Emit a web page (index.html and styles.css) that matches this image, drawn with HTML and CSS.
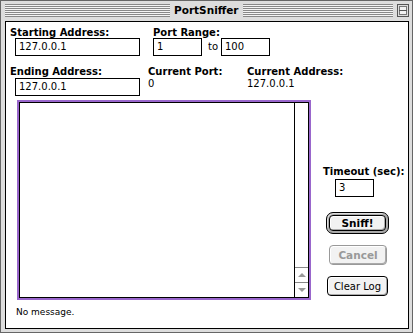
FILE: index.html
```html
<!DOCTYPE html>
<html lang="en">
<head>
    <meta charset="UTF-8">
    <meta name="viewport" content="width=device-width, initial-scale=1.0">
    <title>PortSniffer</title>
    <link rel="stylesheet" href="styles.css">
</head>
<body>
    <div class="window">
        <div class="titlebar">
            <div class="stripes stripes-left"></div>
            <div class="title">PortSniffer</div>
            <div class="stripes stripes-right"></div>
            <svg class="shade-box" width="12" height="13" viewBox="0 0 12 13">
                <rect x="0.5" y="0.5" width="11" height="12" fill="#dddddd" stroke="#555555"/>
                <rect x="2.5" y="2.5" width="7" height="8" fill="#f2f2f2" stroke="#777777"/>
                <line x1="2" y1="6.5" x2="10" y2="6.5" stroke="#555555"/>
            </svg>
        </div>
        <div class="content">
            <div class="row row-first">
                <div class="field field-start">
                    <div class="label">Starting Address:</div>
                    <div class="input input-addr">127.0.0.1</div>
                </div>
                <div class="field field-range">
                    <div class="label">Port Range:</div>
                    <div class="range-inputs">
                        <div class="input input-port">1</div>
                        <span class="to">to</span>
                        <div class="input input-port">100</div>
                    </div>
                </div>
            </div>
            <div class="row row-second">
                <div class="field field-end">
                    <div class="label">Ending Address:</div>
                    <div class="input input-addr">127.0.0.1</div>
                </div>
                <div class="field field-port">
                    <div class="label">Current Port:</div>
                    <div class="value">0</div>
                </div>
                <div class="field field-current">
                    <div class="label">Current Address:</div>
                    <div class="value">127.0.0.1</div>
                </div>
            </div>
            <div class="main">
                <div class="log">
                    <div class="log-inner">
                        <div class="log-text"></div>
                        <div class="scrollbar">
                            <div class="track"></div>
                            <div class="arrow-btn"><span class="arrow arrow-up"></span></div>
                            <div class="arrow-btn"><span class="arrow arrow-down"></span></div>
                        </div>
                    </div>
                </div>
                <div class="side">
                    <div class="label">Timeout (sec):</div>
                    <div class="input input-timeout">3</div>
                    <div class="default-ring">
                        <button class="btn btn-sniff">Sniff!</button>
                    </div>
                    <button class="btn btn-cancel" disabled>Cancel</button>
                    <button class="btn btn-clear">Clear Log</button>
                </div>
            </div>
            <div class="status">No message.</div>
        </div>
    </div>
</body>
</html>
```

FILE: styles.css
```css
* {
    box-sizing: border-box;
}
body {
    margin: 0;
    font-family: "DejaVu Sans", sans-serif;
    background-color: #ffffff;
}
.window {
    width: 413px;
    height: 333px;
    border: 1px solid #666666;
    background-color: #dddddd;
    display: flex;
    flex-direction: column;
}
.titlebar {
    height: 20px;
    display: flex;
    align-items: flex-start;
    padding: 3px 3px 0 4px;
}
.stripes {
    height: 13px;
    background: repeating-linear-gradient(to bottom, #888888 0, #888888 1px, #f4f4f4 1px, #f4f4f4 2px);
}
.stripes-left {
    width: 165px;
}
.stripes-right {
    flex: 1;
}
.title {
    padding: 0 4px;
    font-size: 10.5px;
    font-weight: bold;
    line-height: 13px;
}
.shade-box {
    margin-left: 4px;
    display: block;
}
.content {
    flex: 1;
    margin: 0 3px 3px 4px;
    border: 1px solid #000000;
    background-color: #ffffff;
    display: flex;
    flex-direction: column;
}
.row {
    display: flex;
    padding-left: 4px;
}
.row-first {
    padding-top: 5px;
}
.row-second {
    margin-top: 10px;
}
.field {
    display: flex;
    flex-direction: column;
}
.field-start {
    width: 143px;
}
.field-end {
    width: 138px;
}
.field-port {
    width: 99px;
}
.label {
    font-size: 10px;
    font-weight: bold;
    line-height: 11px;
    white-space: nowrap;
}
.row-second .input {
    margin-top: 1px;
}
.value {
    font-size: 10px;
    line-height: 12px;
    margin-top: 1px;
}
.input {
    height: 18px;
    border: 1px solid #000000;
    font-size: 10px;
    line-height: 16px;
    padding-left: 3px;
    background-color: #ffffff;
}
.input-addr {
    width: 125px;
    margin-left: 5px;
}
.range-inputs {
    display: flex;
}
.input-port {
    width: 49px;
}
.to {
    width: 19px;
    padding-left: 6px;
    font-size: 10px;
    line-height: 18px;
}
.main {
    display: flex;
    margin-top: 4px;
}
.log {
    width: 294px;
    height: 200px;
    margin-left: 11px;
    border: 2px solid #9966cc;
}
.log-inner {
    height: 100%;
    border: 1px solid #000000;
    display: flex;
}
.log-text {
    flex: 1;
}
.scrollbar {
    width: 14px;
    border-left: 1px solid #000000;
    display: flex;
    flex-direction: column;
}
.track {
    flex: 1;
}
.arrow-btn {
    height: 15px;
    border-top: 1px solid #888888;
    display: flex;
    align-items: center;
    justify-content: center;
}
.arrow {
    width: 0;
    height: 0;
    border-left: 4px solid transparent;
    border-right: 4px solid transparent;
}
.arrow-up {
    border-bottom: 4px solid #999999;
}
.arrow-down {
    border-top: 4px solid #999999;
}
.side {
    margin-left: 12px;
    display: flex;
    flex-direction: column;
    align-items: flex-start;
}
.side .label {
    margin-top: 66px;
}
.input-timeout {
    width: 39px;
    margin-top: 2px;
    margin-left: 12px;
}
.default-ring {
    width: 63px;
    height: 22px;
    margin-top: 15px;
    margin-left: 3px;
    padding: 2px;
    border: 1px solid #000000;
    border-radius: 7px;
    background-color: #aaaaaa;
    box-shadow: inset 1px 1px 0 #dddddd;
}
.btn {
    font-family: "DejaVu Sans", sans-serif;
    font-size: 10px;
    color: #000000;
    height: 20px;
    padding: 0;
    border: 1px solid #000000;
    border-radius: 4px;
    background-color: #f2f2f2;
    box-shadow: inset 1px 1px 0 #ffffff, inset -1px -1px 0 #aaaaaa;
    display: flex;
    align-items: center;
    justify-content: center;
}
.btn-sniff {
    width: 100%;
    height: 16px;
    font-size: 10.5px;
    font-weight: bold;
}
.btn-cancel {
    width: 58px;
    margin-top: 11px;
    margin-left: 6px;
    border-color: #999999;
    color: #999999;
    font-weight: bold;
    font-size: 10.5px;
}
.btn-clear {
    width: 61px;
    margin-top: 11px;
    margin-left: 4px;
}
.status {
    margin-top: 6px;
    padding-left: 10px;
    font-size: 9px;
    line-height: 12px;
}
```
